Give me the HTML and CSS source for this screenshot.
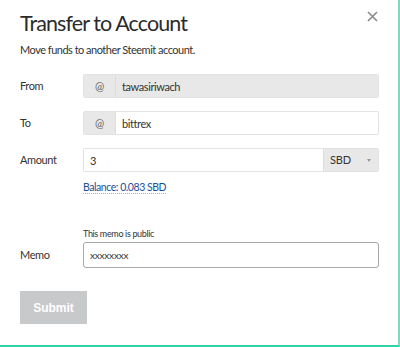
FILE: index.html
```html
<!DOCTYPE html>
<html lang="en">
    <head>
        <meta charset="UTF-8">
        <title>Transfer to Account</title>
        <link rel="stylesheet" href="styles.css">
    </head>
    <body>
        <div class="modal">
            <button class="close" aria-label="Close">
                <svg width="11" height="11" viewBox="0 0 11 11">
                    <path d="M1 1L10 10M10 1L1 10" stroke="#8a8a8a" stroke-width="1.6" fill="none"/>
                </svg>
            </button>
            <h1>Transfer to Account</h1>
            <p class="lead">Move funds to another Steemit account.</p>

            <div class="row">
                <label>From</label>
                <div class="group">
                    <span class="addon">@</span>
                    <input type="text" value="tawasiriwach" disabled>
                </div>
            </div>

            <div class="row">
                <label>To</label>
                <div class="group">
                    <span class="addon">@</span>
                    <input type="text" value="bittrex">
                </div>
            </div>

            <div class="row">
                <label>Amount</label>
                <div class="field">
                    <div class="group">
                        <input type="text" value="3">
                        <span class="select">SBD <span class="caret"></span></span>
                    </div>
                    <a class="balance">Balance: 0.083 SBD</a>
                </div>
            </div>

            <div class="row memo">
                <label>Memo</label>
                <div class="field">
                    <small>This memo is public</small>
                    <input class="memo-input" type="text" value="xxxxxxxx">
                </div>
            </div>

            <button class="submit" disabled>Submit</button>
        </div>
    </body>
</html>
```

FILE: styles.css
```css
body {
    margin: 0;
    font-family: Lato, "Liberation Sans", sans-serif;
    color: #333;
    background: #fff;
}
.modal {
    position: relative;
    width: 400px;
    height: 347px;
    box-sizing: border-box;
    padding: 9px 19px 0 20px;
    border-right: 2px solid #7fd8c0;
    border-bottom: 2px solid #2fd3a9;
}
.close {
    position: absolute;
    top: 11px;
    left: 367px;
    border: none;
    background: none;
    padding: 0;
    line-height: 0;
}
h1 {
    margin: 0;
    font-size: 21.5px;
    font-weight: 400;
    letter-spacing: -0.9px;
    line-height: 28px;
    color: #2b2b2b;
}
.lead {
    margin: 5px 0 16px;
    font-size: 11px;
    letter-spacing: -0.5px;
    line-height: 16px;
}
.row {
    display: flex;
    align-items: flex-start;
    margin-bottom: 13px;
}
.row label {
    width: 63px;
    flex: none;
    font-size: 11px;
    letter-spacing: -0.4px;
    line-height: 24px;
}
.field {
    flex: 1;
}
.group {
    flex: 1;
    display: flex;
    height: 24px;
    border: 1px solid #e2e2e2;
    border-radius: 2px;
    box-sizing: border-box;
    overflow: hidden;
}
.addon {
    width: 31px;
    flex: none;
    background: #e8e8e8;
    border-right: 1px solid #dcdcdc;
    font-size: 11px;
    color: #666;
    text-align: center;
    line-height: 22px;
}
.group input {
    flex: 1;
    min-width: 0;
    border: none;
    padding: 0 6px;
    font: inherit;
    font-size: 11px;
    letter-spacing: -0.4px;
    color: #333;
    background: #fff;
}
.group input:disabled {
    background: #e8e8e8;
}
.select {
    width: 55px;
    flex: none;
    background: #e8e8e8;
    border-left: 1px solid #dcdcdc;
    font-size: 11px;
    letter-spacing: -0.2px;
    line-height: 22px;
    padding-left: 6px;
    box-sizing: border-box;
    position: relative;
}
.caret {
    position: absolute;
    right: 7px;
    top: 10px;
    border-left: 2px solid transparent;
    border-right: 2px solid transparent;
    border-top: 3px solid #999;
}
.balance {
    display: inline-block;
    margin-top: 9px;
    font-size: 10.5px;
    letter-spacing: -0.45px;
    line-height: 12px;
    color: #1a5099;
    border-bottom: 1px dotted #9db0cc;
}
.memo {
    margin-top: 34px;
    align-items: flex-end;
}
.memo label {
    line-height: 26px;
}
.memo small {
    display: block;
    font-size: 9px;
    letter-spacing: -0.35px;
    line-height: 12px;
    margin-bottom: 2px;
}
.memo-input {
    display: block;
    width: 100%;
    height: 26px;
    box-sizing: border-box;
    border: 1px solid #a8a8a8;
    border-radius: 3px;
    padding: 0 6px;
    font: inherit;
    font-size: 10px;
    letter-spacing: -0.2px;
    color: #333;
}
.submit {
    display: block;
    margin-top: 23px;
    width: 67px;
    height: 33px;
    border: none;
    background: #c8c9cb;
    color: #fff;
    font-family: "Liberation Sans", Arial, sans-serif;
    font-weight: bold;
    font-size: 12px;
}
```
